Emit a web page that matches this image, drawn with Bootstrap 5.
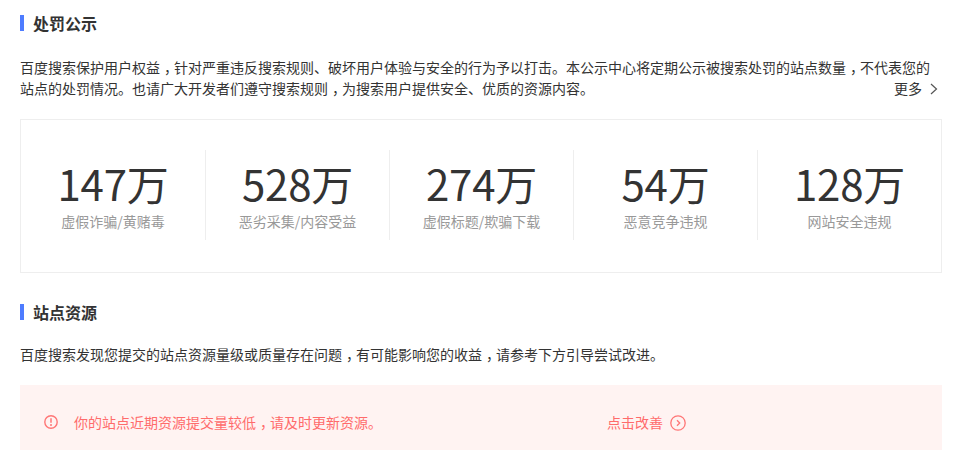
<!DOCTYPE html>
<html lang="zh-CN">
<head>
<meta charset="utf-8">
<title>处罚公示</title>
<link rel="stylesheet" href="https://cdn.jsdelivr.net/npm/bootstrap@5.3.0/dist/css/bootstrap.min.css">
<style>
html,body{height:450px;overflow:hidden;background:#fff}
body{font-family:"Noto Sans CJK SC","Liberation Sans",sans-serif;font-size:14px;line-height:21px;color:#333}
.pg{padding:15px 28px 0 20px}
.sec-title{font-size:16px;line-height:22px;font-weight:700;color:#333;border-left:4px solid #4e7cff;padding-left:9px;height:16px;display:flex;align-items:center}
.intro{margin:26px 0 0;position:relative}
.cm{font-feature-settings:"halt";margin-left:4px;margin-right:3px}
.more{position:absolute;right:4px;bottom:0;display:flex;align-items:center;gap:8px;color:#333;text-decoration:none}
.stats{border:1px solid #eee;margin-top:20px;height:154px;display:flex;align-items:center;padding-bottom:2px}
.stat{width:184px;height:90px;border-left:1px solid #eee;text-align:center}
.stat:first-child{border-left:0}
.num{font-size:42px;line-height:50px;margin-top:8px;color:#333;letter-spacing:-.25px}
.lbl{color:#999;line-height:20px;margin-top:3px}
.sec2{margin-top:31px}
.p2{margin:24px 0 0}
.warn{background:#fff3f2;height:65px;margin-top:20px;color:#ff6b6b;padding:27px 0 0 24px;display:flex;align-items:flex-start}
.warn svg{flex:none}
.warn-ic{margin-top:3px}
.warn-t{width:533px;margin-left:16px}
.fix{display:flex;align-items:center;gap:7px;color:#ff6b6b;text-decoration:none}
</style>
</head>
<body>
<div class="pg">
<div class="sec-title">处罚公示</div>
<p class="intro">百度搜索保护用户权益<span class="cm">，</span>针对严重违反搜索规则、破坏用户体验与安全的行为予以打击。本公示中心将定期公示被搜索处罚的站点数量<span class="cm">，</span>不代表您的<br>站点的处罚情况。也请广大开发者们遵守搜索规则<span class="cm">，</span>为搜索用户提供安全、优质的资源内容。<a class="more" href="#">更多<svg width="8" height="12" viewBox="0 0 8 12"><path d="M1 1l5.5 5L1 11" fill="none" stroke="#555" stroke-width="1.2"/></svg></a></p>
<div class="stats">
<div class="stat"><div class="num">147万</div><div class="lbl">虚假诈骗/黄赌毒</div></div>
<div class="stat"><div class="num">528万</div><div class="lbl">恶劣采集/内容受益</div></div>
<div class="stat"><div class="num">274万</div><div class="lbl">虚假标题/欺骗下载</div></div>
<div class="stat"><div class="num">54万</div><div class="lbl">恶意竞争违规</div></div>
<div class="stat"><div class="num">128万</div><div class="lbl">网站安全违规</div></div>
</div>
<div class="sec-title sec2">站点资源</div>
<p class="p2">百度搜索发现您提交的站点资源量级或质量存在问题<span class="cm">，</span>有可能影响您的收益<span class="cm">，</span>请参考下方引导尝试改进。</p>
<div class="warn">
<svg class="warn-ic" width="14" height="14" viewBox="0 0 14 14"><circle cx="7" cy="7" r="6.2" fill="none" stroke="#ff7676" stroke-width="1.4"/><path d="M7 3.3v4.4" stroke="#ff7676" stroke-width="1.5"/><circle cx="7" cy="10" r="1" fill="#ff7676"/></svg>
<div class="warn-t">你的站点近期资源提交量较低<span class="cm">，</span>请及时更新资源。</div>
<a class="fix" href="#">点击改善<svg width="16" height="16" viewBox="0 0 16 16"><circle cx="8" cy="8" r="7.2" fill="none" stroke="#ff7676" stroke-width="1.3"/><path d="M7 5.3l2.7 2.7L7 10.7" fill="none" stroke="#ff7676" stroke-width="1.3"/></svg></a>
</div>
</div>
<script src="https://cdn.jsdelivr.net/npm/bootstrap@5.3.0/dist/js/bootstrap.bundle.min.js"></script>
</body>
</html>
